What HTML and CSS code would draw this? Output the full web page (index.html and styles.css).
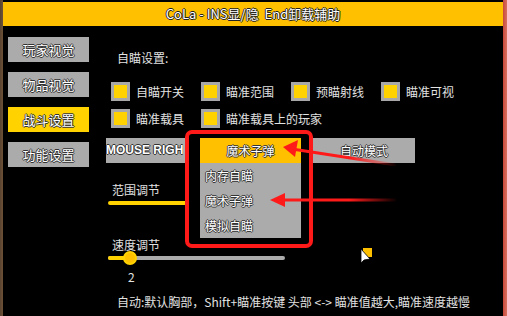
FILE: index.html
```html
<!DOCTYPE html>
<html lang="zh-CN">
<head>
    <meta charset="UTF-8">
    <meta name="viewport" content="width=device-width, initial-scale=1.0">
    <title>CoLa</title>
    <link rel="stylesheet" href="styles.css">
</head>
<body>
    <div class="window">
        <div class="titlebar">CoLa - INS显/隐&nbsp; End卸载辅助</div>
        <div class="main">
            <div class="sidebar">
                <div class="tab">玩家视觉</div>
                <div class="tab">物品视觉</div>
                <div class="tab active">战斗设置</div>
                <div class="tab">功能设置</div>
            </div>
            <div class="content">
                <div class="heading">自瞄设置:</div>
                <div class="checks">
                    <div class="check"><span class="box"></span>自瞄开关</div>
                    <div class="check"><span class="box"></span>瞄准范围</div>
                    <div class="check"><span class="box"></span>预瞄射线</div>
                    <div class="check"><span class="box"></span>瞄准可视</div>
                    <div class="check"><span class="box"></span>瞄准载具</div>
                    <div class="check wide"><span class="box"></span>瞄准载具上的玩家</div>
                </div>
                <div class="combos">
                    <div class="combo key">MOUSE RIGHT</div>
                    <div class="combo gap"></div>
                    <div class="combo mode">自动模式</div>
                </div>
                <div class="label">范围调节</div>
                <div class="track full"></div>
                <div class="label speed">速度调节</div>
                <div class="track">
                    <div class="fill"></div>
                    <div class="knob"></div>
                </div>
                <div class="value">2</div>
                <div class="hint">自动:默认胸部，Shift+瞄准按键 头部 &lt;-&gt; 瞄准值越大,瞄准速度越慢</div>

                <div class="highlight">
                    <div class="dropdown">
                        <div class="option selected">魔术子弹</div>
                        <div class="option">内存自瞄</div>
                        <div class="option">魔术子弹</div>
                        <div class="option">模拟自瞄</div>
                    </div>
                </div>

                <svg class="arrows" width="397" height="290" viewBox="0 0 397 290">
                    <defs>
                        <linearGradient id="fade" x1="292" y1="0" x2="170" y2="0" gradientUnits="userSpaceOnUse">
                            <stop offset="0" stop-color="#ff1a1a" stop-opacity="0"/>
                            <stop offset="0.4" stop-color="#ff1a1a"/>
                            <stop offset="1" stop-color="#ff1a1a"/>
                        </linearGradient>
                    </defs>
                    <!-- arrow to selected item -->
                    <line x1="290" y1="139" x2="186" y2="123" stroke="url(#fade)" stroke-width="3"/>
                    <polygon points="177,121 192,114 189,131" fill="#ff1a1a"/>
                    <!-- arrow to list item -->
                    <line x1="290" y1="174" x2="176" y2="174" stroke="url(#fade)" stroke-width="3"/>
                    <polygon points="164,174 179,167 179,181" fill="#ff1a1a"/>
                </svg>

                <svg class="cursor" width="14" height="18" viewBox="0 0 14 18">
                    <rect x="3" y="0" width="9" height="9" fill="#ffc000"/>
                    <path d="M1 1 L1 15 L4 12 L10 11 Z" fill="#fff" stroke="#000" stroke-width="0.8"/>
                </svg>
            </div>
        </div>
    </div>
</body>
</html>
```

FILE: styles.css
```css
body {
    margin: 0;
    width: 507px;
    height: 316px;
    overflow: hidden;
    background: linear-gradient(90deg, #5a4430 0, #6d5238 3px, #000 3px, #000 503px, #c8473a 503px, #d9705e 507px);
    font-family: "Noto Sans CJK SC", "Noto Sans", sans-serif;
}

.window {
    margin: 2px 4px 0 3px;
    height: 314px;
    background-color: #000;
    color: #e2e2e2;
}

.titlebar {
    height: 24px;
    line-height: 24px;
    background-color: #ffc000;
    color: #fff;
    text-align: center;
    font-size: 13px;
    text-shadow: -1px 0 #222, 1px 0 #222, 0 -1px #222, 0 1px #222;
}

.main {
    display: flex;
}

.sidebar {
    width: 98px;
    padding: 11px 0 0 5px;
    display: flex;
    flex-direction: column;
    gap: 10px;
}

.tab {
    width: 81px;
    height: 25px;
    line-height: 25px;
    background-color: #ababab;
    color: #fff;
    text-align: center;
    font-size: 13px;
    text-shadow: -1px 0 #333, 1px 0 #333, 0 -1px #333, 0 1px #333;
}

.tab.active {
    background-color: #ffd200;
}

.content {
    position: relative;
    flex: 1;
    font-size: 12px;
}

.heading {
    margin-top: 24px;
    padding-left: 11px;
    line-height: 16px;
}

.checks {
    margin-top: 16px;
    padding-left: 5px;
    display: grid;
    grid-template-columns: repeat(4, 90px);
    row-gap: 9px;
}

.check {
    display: flex;
    align-items: center;
    gap: 6px;
    height: 18px;
    white-space: nowrap;
}

.box {
    width: 13px;
    height: 13px;
    border: 3px solid #a8a8a8;
    background-color: #ffd200;
    flex-shrink: 0;
}

.combos {
    margin-top: 11px;
    display: flex;
    height: 25px;
    width: 309px;
    background-color: #ababab;
    color: #fff;
    text-shadow: -1px 0 #333, 1px 0 #333, 0 -1px #333, 0 1px #333;
}

.combo {
    line-height: 25px;
    text-align: center;
    font-size: 12px;
}

.combo.key {
    width: 77px;
    overflow: hidden;
    white-space: nowrap;
    text-align: left;
    font-family: "Liberation Sans", sans-serif;
    font-weight: bold;
    font-size: 12px;
}

.combo.gap {
    width: 130px;
}

.combo.mode {
    flex: 1;
}

.label {
    margin-top: 19px;
    padding-left: 6px;
    line-height: 16px;
}

.label.speed {
    margin-top: 32px;
}

.track {
    position: relative;
    margin: 3px 0 0 2px;
    width: 177px;
    height: 4px;
    border-radius: 2px;
    background-color: #ababab;
}

.track.full {
    background-color: #ffd200;
}

.fill {
    width: 22px;
    height: 4px;
    border-radius: 2px;
    background-color: #ffd200;
}

.knob {
    position: absolute;
    left: 15px;
    top: -5px;
    width: 10px;
    height: 10px;
    border-radius: 50%;
    background-color: #ffc000;
    border: 2px solid #ffd200;
}

.value {
    margin-top: 10px;
    padding-left: 22px;
    line-height: 14px;
}

.hint {
    margin-top: 10px;
    padding-left: 11px;
    line-height: 16px;
    white-space: nowrap;
}

.highlight {
    position: absolute;
    left: 79px;
    top: 104px;
    width: 101px;
    height: 100px;
    padding: 4px 8px 6px 11px;
    border: 4px solid #ff1a1a;
    border-radius: 7px;
    background-color: #000;
}

.dropdown {
    width: 101px;
    background-color: #ababab;
}

.option {
    height: 25px;
    line-height: 25px;
    padding-left: 5px;
    color: #fff;
    text-shadow: -1px 0 #333, 1px 0 #333, 0 -1px #333, 0 1px #333;
}

.option.selected {
    background-color: #ffc000;
    text-align: center;
    padding-left: 0;
}

.arrows {
    position: absolute;
    left: 0;
    top: 0;
}

.cursor {
    position: absolute;
    left: 254px;
    top: 222px;
}
```
